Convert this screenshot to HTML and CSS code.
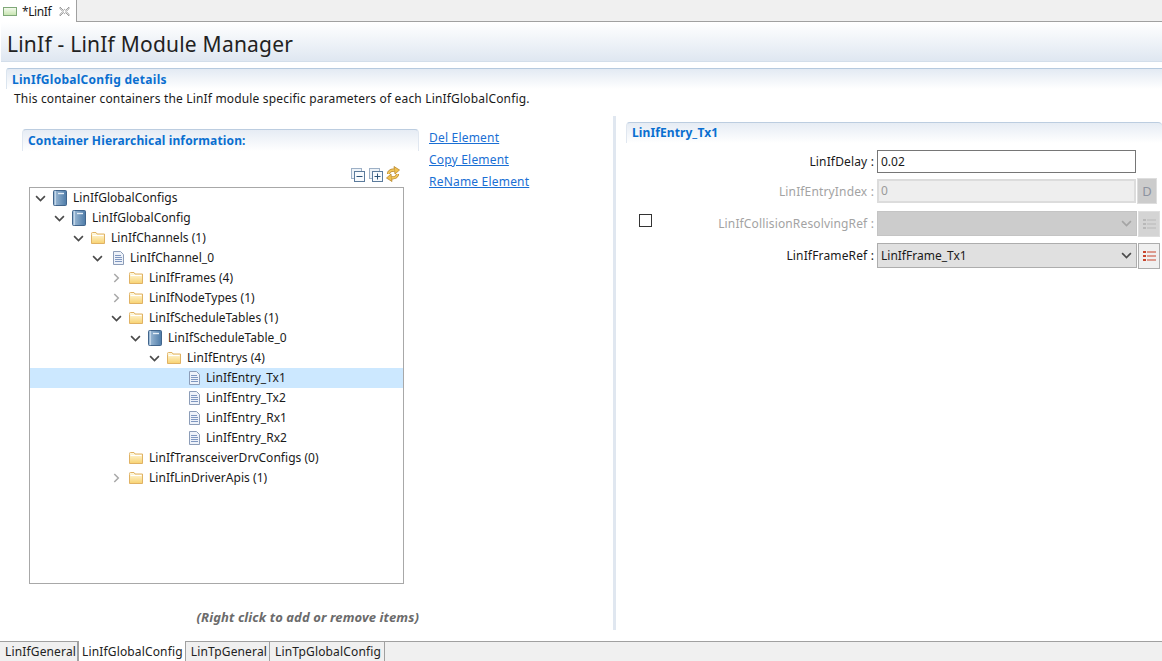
FILE: index.html
```html
<!DOCTYPE html>
<html lang="en">
<head>
<meta charset="utf-8">
<title>LinIf</title>
<link rel="stylesheet" href="styles.css">
</head>
<body>
<svg class="defs" width="0" height="0" aria-hidden="true">
  <defs>
    <linearGradient id="fg" x1="0" y1="0" x2="0" y2="1"><stop offset="0" stop-color="#fffbe6"/><stop offset="1" stop-color="#f8d270"/></linearGradient>
    <linearGradient id="bg" x1="0" y1="0" x2="1" y2="0"><stop offset="0" stop-color="#a3bfd9"/><stop offset="1" stop-color="#4d7ba8"/></linearGradient>
    <linearGradient id="gg" x1="0" y1="0" x2="0" y2="1"><stop offset="0" stop-color="#f6fbf0"/><stop offset="1" stop-color="#c6e4ae"/></linearGradient>
    <symbol id="folder" viewBox="0 0 14 12">
      <path d="M.5 2.500V1.500a1 1 0 0 1 1-1h3.500l1 1.500h7.500v9.500H.5z" fill="url(#fg)" stroke="#e0b264"/>
      <path d="M1.500 3.500h11" stroke="#fff" fill="none"/>
    </symbol>
    <symbol id="book" viewBox="0 0 14 16">
      <rect x=".5" y=".5" width="13" height="15" rx="1" fill="url(#bg)" stroke="#41658c"/>
      <path d="M2.500 .8v14.400" stroke="#c3d6e8" fill="none"/>
      <path d="M5 3.500h6" stroke="#e6eff7" stroke-width="1.400" fill="none"/>
    </symbol>
    <symbol id="doc" viewBox="0 0 11 14">
      <path d="M.5.5h7l3 3v10H.5z" fill="#eef2f9" stroke="#8c9db8"/>
      <path d="M2 4.500h6M2 6.500h7M2 8.500h7M2 10.500h7" stroke="#7f97c0" fill="none"/>
    </symbol>
    <symbol id="open" viewBox="0 0 10 6"><path d="M1 .8l4 4 4-4" fill="none" stroke="#4a4a4a" stroke-width="1.500"/></symbol>
    <symbol id="closed" viewBox="0 0 6 10"><path d="M.8 1l4 4-4 4" fill="none" stroke="#a8a8a8" stroke-width="1.500"/></symbol>
    <symbol id="list" viewBox="0 0 13 10">
      <path d="M0 1h3M0 5h3M0 9h3" stroke="currentColor" stroke-width="2" fill="none"/>
      <path d="M4 1h9M4 5h9M4 9h9" stroke="currentColor" fill="none"/>
    </symbol>
    <g id="sync-arrow">
      <path d="M2.500 8C2.500 5.500 5 3.800 8.500 4.200" fill="none" stroke="#b9862c" stroke-width="3.200"/>
      <path d="M8 .5l5.500 3.500L9 8z" fill="#f1c14f" stroke="#b9862c" stroke-width=".8"/>
      <path d="M2.500 8C2.500 5.500 5 3.800 8.500 4.200" fill="none" stroke="#f3c95f" stroke-width="1.600"/>
    </g>
  </defs>
</svg>

<div class="editor-tabs">
  <div class="editor-tab">
    <svg class="tab-icon" viewBox="0 0 14 9"><rect x=".5" y=".5" width="13" height="8" fill="url(#gg)" stroke="#7fa878"/></svg>
    <span class="tab-text">*LinIf</span>
    <svg class="tab-close" viewBox="0 0 10 10"><path d="M1 1l3 3 1-1 1 1 3-3 0 1.500-2.500 2.500 2.500 2.500v1.500l-3-3-1 1-1-1-3 3V7.500l2.500-2.500L1 2.500z" fill="#fff" stroke="#8f8f8f" stroke-width=".8"/></svg>
  </div>
</div>

<header class="page-title">LinIf - LinIf Module Manager</header>

<section class="details">
  <h2 class="details-head">LinIfGlobalConfig details</h2>
  <p class="details-desc">This container containers the LinIf module specific parameters of each LinIfGlobalConfig.</p>
</section>

<main class="workspace">
  <div class="left-pane">
    <div class="tree-col">
      <h3 class="card-head tree-head">Container Hierarchical information:</h3>
      <div class="tree-tools">
        <svg class="tool" viewBox="0 0 14 14"><rect x=".5" y=".5" width="10" height="10" fill="#eef3f8" stroke="#9db0c6"/><rect x="3.500" y="3.500" width="10" height="10" fill="#f7fafd" stroke="#5b7b9c"/><path d="M5.500 8.500h6" stroke="#2c5378"/></svg>
        <svg class="tool" viewBox="0 0 14 14"><rect x=".5" y=".5" width="10" height="10" fill="#eef3f8" stroke="#9db0c6"/><rect x="3.500" y="3.500" width="10" height="10" fill="#f7fafd" stroke="#5b7b9c"/><path d="M5.500 8.500h6M8.500 5.500v6" stroke="#2c5378"/></svg>
        <svg class="tool sync" viewBox="0 0 15 16"><use href="#sync-arrow"/><use href="#sync-arrow" transform="rotate(180 7 8)"/></svg>
      </div>
      <div class="tree">
        <div class="row d0"><svg class="tw"><use href="#open"/></svg><svg class="ic book"><use href="#book"/></svg><span>LinIfGlobalConfigs</span></div>
        <div class="row d1"><svg class="tw"><use href="#open"/></svg><svg class="ic book"><use href="#book"/></svg><span>LinIfGlobalConfig</span></div>
        <div class="row d2"><svg class="tw"><use href="#open"/></svg><svg class="ic folder"><use href="#folder"/></svg><span>LinIfChannels (1)</span></div>
        <div class="row d3"><svg class="tw"><use href="#open"/></svg><svg class="ic doc"><use href="#doc"/></svg><span>LinIfChannel_0</span></div>
        <div class="row d4"><svg class="tw closed"><use href="#closed"/></svg><svg class="ic folder"><use href="#folder"/></svg><span>LinIfFrames (4)</span></div>
        <div class="row d4"><svg class="tw closed"><use href="#closed"/></svg><svg class="ic folder"><use href="#folder"/></svg><span>LinIfNodeTypes (1)</span></div>
        <div class="row d4"><svg class="tw"><use href="#open"/></svg><svg class="ic folder"><use href="#folder"/></svg><span>LinIfScheduleTables (1)</span></div>
        <div class="row d5"><svg class="tw"><use href="#open"/></svg><svg class="ic book"><use href="#book"/></svg><span>LinIfScheduleTable_0</span></div>
        <div class="row d6"><svg class="tw"><use href="#open"/></svg><svg class="ic folder"><use href="#folder"/></svg><span>LinIfEntrys (4)</span></div>
        <div class="row d7 selected"><svg class="tw"></svg><svg class="ic doc"><use href="#doc"/></svg><span>LinIfEntry_Tx1</span></div>
        <div class="row d7"><svg class="tw"></svg><svg class="ic doc"><use href="#doc"/></svg><span>LinIfEntry_Tx2</span></div>
        <div class="row d7"><svg class="tw"></svg><svg class="ic doc"><use href="#doc"/></svg><span>LinIfEntry_Rx1</span></div>
        <div class="row d7"><svg class="tw"></svg><svg class="ic doc"><use href="#doc"/></svg><span>LinIfEntry_Rx2</span></div>
        <div class="row d4"><svg class="tw"></svg><svg class="ic folder"><use href="#folder"/></svg><span>LinIfTransceiverDrvConfigs (0)</span></div>
        <div class="row d4"><svg class="tw closed"><use href="#closed"/></svg><svg class="ic folder"><use href="#folder"/></svg><span>LinIfLinDriverApis (1)</span></div>
      </div>
      <p class="hint">(Right click to add or remove items)</p>
    </div>
    <nav class="actions">
      <a href="#">Del Element</a>
      <a href="#">Copy Element</a>
      <a href="#">ReName Element</a>
    </nav>
  </div>

  <div class="right-pane">
    <h3 class="card-head entry-head">LinIfEntry_Tx1</h3>
    <div class="form">
      <div class="field f-delay">
        <span class="check-slot"></span>
        <label class="lbl">LinIfDelay :</label>
        <div class="input">0.02</div>
      </div>
      <div class="field f-index">
        <span class="check-slot"></span>
        <label class="lbl dim">LinIfEntryIndex :</label>
        <div class="input disabled">0</div>
        <div class="side-btn d-btn">D</div>
      </div>
      <div class="field f-coll">
        <span class="check-slot"><span class="check"></span></span>
        <label class="lbl dim">LinIfCollisionResolvingRef :</label>
        <div class="select sel-disabled"><svg class="caret dimcaret"><use href="#open"/></svg></div>
        <div class="side-btn list-off"><svg class="list"><use href="#list"/></svg></div>
      </div>
      <div class="field f-frame">
        <span class="check-slot"></span>
        <label class="lbl">LinIfFrameRef :</label>
        <div class="select"><span>LinIfFrame_Tx1</span><svg class="caret"><use href="#open"/></svg></div>
        <div class="side-btn list-on"><svg class="list"><use href="#list"/></svg></div>
      </div>
    </div>
  </div>
</main>

<footer class="page-tabs">
  <div class="page-tab">LinIfGeneral</div>
  <div class="page-tab active">LinIfGlobalConfig</div>
  <div class="page-tab">LinTpGeneral</div>
  <div class="page-tab">LinTpGlobalConfig</div>
</footer>
</body>
</html>
```

FILE: styles.css
```css
* { box-sizing: border-box; }
html, body { margin: 0; padding: 0; }
body {
  width: 1162px;
  height: 661px;
  overflow: hidden;
  background: #fff;
  font-family: "Noto Sans", "Open Sans", sans-serif;
  font-size: 12px;
  color: #1a1a1a;
  display: flex;
  flex-direction: column;
}
.defs { position: absolute; }

.editor-tabs {
  height: 22px;
  flex: none;
  background: #f0f0f0;
  border-bottom: 1px solid #a0a0a0;
  display: flex;
}
.editor-tab {
  width: 77px;
  height: 22px;
  background: #fff;
  border-right: 1px solid #a0a0a0;
  display: flex;
  align-items: center;
  padding-left: 3px;
}
.tab-icon { width: 14px; height: 9px; margin-right: 5px; }
.tab-text { letter-spacing: -.4px; }
.tab-close { width: 11px; height: 11px; margin-left: 8px; }

.page-title {
  flex: none;
  height: 40px;
  margin-left: 1px;
  padding: 4px 0 0 6px;
  font-size: 21px;
  line-height: 36px;
  letter-spacing: .22px;
  color: #222;
  background: linear-gradient(#fff, #dfe7f1);
  border-bottom: 1px solid #d3deea;
}

.details { flex: none; height: 54px; padding: 6px 0 0 6px; }
.details-head {
  margin: 0;
  height: 21px;
  padding-left: 5px;
  font-size: 12px;
  font-weight: 700;
  line-height: 22px;
  letter-spacing: .28px;
  color: #0a6fd0;
  background: linear-gradient(#e3eaf3, #fff);
  border-top: 1px solid #b6cadf;
  border-left: 1px solid #dbe5ef;
  border-top-left-radius: 3px;
}
.details-desc { margin: 0; padding-left: 8px; line-height: 20px; letter-spacing: .17px; }

.workspace { flex: 1; display: flex; min-height: 0; }

.left-pane { width: 616px; flex: none; height: 514px; display: flex; border-right: 3px solid #e0e7f0; padding: 13px 0 0 22px; }
.tree-col { width: 397px; flex: none; }
.card-head {
  margin: 0;
  font-size: 12px;
  font-weight: 700;
  color: #0a6fd0;
  background: linear-gradient(#e6ecf4, #fff);
  border-top: 1px solid #bccde0;
  border-left: 1px solid #e0e7f0;
  border-right: 1px solid #e0e7f0;
  border-radius: 4px 4px 0 0;
}
.tree-head { height: 22px; padding-left: 5px; line-height: 21px; letter-spacing: .14px; }
.tree-tools { height: 36px; display: flex; justify-content: flex-end; align-items: flex-end; gap: 4px; padding: 0 18px 5px 0; }
.tool { width: 14px; height: 14px; }
.tool.sync { width: 15px; height: 16px; margin-left: -1px; }
.tree {
  width: 375px;
  height: 397px;
  margin-left: 7px;
  border: 1px solid #a8a8a8;
  letter-spacing: .03px;
}
.row { height: 20px; display: flex; align-items: center; white-space: nowrap; line-height: 20px; }
.row.selected { background: #cce8ff; }
.d0 { padding-left: 5px; }
.d1 { padding-left: 24px; }
.d2 { padding-left: 43px; }
.d3 { padding-left: 62px; }
.d4 { padding-left: 81px; }
.d5 { padding-left: 100px; }
.d6 { padding-left: 119px; }
.d7 { padding-left: 138px; }
.tw { width: 11px; height: 7px; flex: none; margin-right: 6px; }
.tw.closed { height: 10px; }
.ic { flex: none; }
.ic.book { width: 14px; height: 16px; margin: 0 6px 0 1px; }
.ic.folder { width: 14px; height: 12px; margin: 0 6px 0 1px; }
.ic.doc { width: 11px; height: 14px; margin: 0 6px 0 4px; }

.hint {
  margin: 23px 0 0;
  text-align: right;
  font-size: 13px;
  font-weight: 700;
  font-style: italic;
  letter-spacing: .1px;
  color: #6b6b6b;
  line-height: 20px;
  white-space: nowrap;
}

.actions { display: flex; flex-direction: column; gap: 4px; margin-left: 10px; letter-spacing: .2px; }
.actions a { color: #1a6fd4; line-height: 18px; text-decoration: underline; white-space: nowrap; }

.right-pane { flex: 1; min-width: 0; padding: 6px 0 0 10px; }
.entry-head { height: 21px; padding-left: 5px; line-height: 20px; border-right: 0; letter-spacing: .1px; }
.form { display: flex; flex-direction: column; margin-top: 3px; }
.field { display: flex; align-items: center; }
.f-delay, .f-index { height: 30px; }
.f-coll { height: 35px; }
.f-frame { height: 29px; }
.check-slot { width: 15px; flex: none; }
.check { display: block; width: 13px; height: 13px; border: 1px solid #333; background: #fff; margin: 0 0 6px 13px; }
.lbl { width: 236px; flex: none; text-align: right; color: #1a1a1a; padding-right: 3px; white-space: nowrap; letter-spacing: .15px; }
.lbl.dim { color: #a3a3a3; }
.input {
  width: 259px;
  height: 23px;
  padding-left: 3px;
  line-height: 21px;
  border: 1px solid #767676;
  background: #fff;
}
.input.disabled { height: 24px; background: #eeeeee; border: 2px solid #dcdcdc; color: #9a9a9a; line-height: 20px; padding-left: 2px; }
.select {
  width: 260px;
  height: 25px;
  background: #e0e0e0;
  border: 1px solid #adadad;
  display: flex;
  align-items: center;
  padding-left: 3px;
  position: relative;
}
.sel-disabled { background: #cccccc; border-color: #c4c4c4; }
.caret { position: absolute; right: 4px; top: 8px; width: 11px; height: 7px; }
.dimcaret { opacity: .3; }
.side-btn { flex: none; display: flex; align-items: center; justify-content: center; }
.d-btn { width: 20px; height: 26px; margin-left: 1px; background: #cccccc; border: 1px solid #dedede; color: #8c93a0; font-size: 13px; }
.list-off, .list-on { width: 22px; height: 26px; margin-left: 1px; }
.list-off { background: #d4d4d4; border: 1px solid #dedede; color: #b8b8b8; }
.list-on { background: #f0f0f0; border: 1px solid #adadad; color: #c8452d; }
.list { width: 13px; height: 10px; }

.page-tabs {
  flex: none;
  height: 20px;
  background: #f0f0f0;
  border-top: 1px solid #a0a0a0;
  display: flex;
  padding-left: 1px;
  letter-spacing: .15px;
}
.page-tab { padding: 0 2px 0 5px; line-height: 19px; border-right: 1px solid #a0a0a0; white-space: nowrap; color: #222; }
.page-tab:first-child { padding: 0 1px 0 4px; }
.page-tab:last-child { padding-right: 3px; }
.page-tab.active { background: #fff; height: 20px; margin-top: -1px; padding: 0 2px 0 3px; border-left: 1px solid #a0a0a0; line-height: 21px; }
```
